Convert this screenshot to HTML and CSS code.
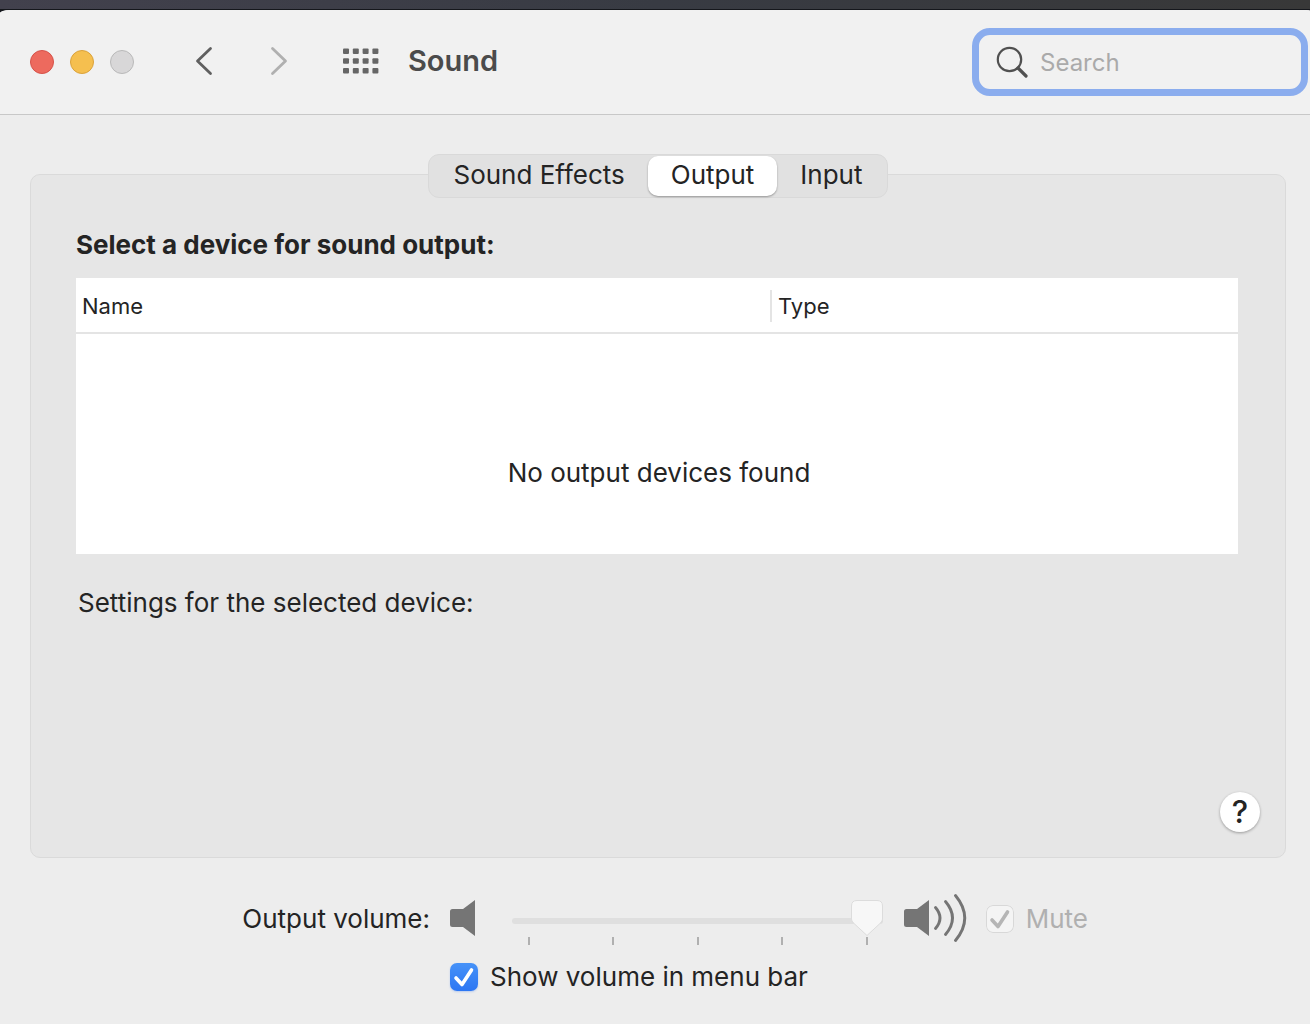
FILE: index.html
```html
<!DOCTYPE html>
<html lang="en">
<head>
<meta charset="utf-8">
<meta name="viewport" content="width=device-width, initial-scale=1">
<title>Sound</title>
<link rel="stylesheet" href="styles.css">
</head>
<body>
<div class="window">
  <header class="titlebar">
    <div class="lights">
      <button class="light light-close" type="button" aria-label="Close"></button>
      <button class="light light-minimize" type="button" aria-label="Minimize"></button>
      <button class="light light-zoom" type="button" aria-label="Zoom" disabled></button>
    </div>
    <nav class="history">
      <button class="icon-button" type="button" aria-label="Back">
        <svg width="20" height="32" viewBox="0 0 20 32"><path d="M16.500 2.500 3.500 15l13 12.500" fill="none" stroke="#606060" stroke-width="2.800" stroke-linecap="round" stroke-linejoin="round"/></svg>
      </button>
      <button class="icon-button" type="button" aria-label="Forward" disabled>
        <svg width="20" height="32" viewBox="0 0 20 32"><path d="M3.500 2.500 16.500 15l-13 12.500" fill="none" stroke="#b0b0b0" stroke-width="2.800" stroke-linecap="round" stroke-linejoin="round"/></svg>
      </button>
    </nav>
    <button class="icon-button" type="button" aria-label="Show all">
      <svg width="36" height="28" viewBox="0 0 36 28" fill="#666">
        <g id="dots"><rect x="0" y="0.500" width="6" height="5.500" rx="1"/><rect x="9.800" y="0.500" width="6" height="5.500" rx="1"/><rect x="19.600" y="0.500" width="6" height="5.500" rx="1"/><rect x="29.400" y="0.500" width="6" height="5.500" rx="1"/></g>
        <use href="#dots" y="9.700"/><use href="#dots" y="19.400"/>
      </svg>
    </button>
    <h1 class="title">Sound</h1>
    <label class="search">
      <svg width="34" height="34" viewBox="0 0 34 34" fill="none" stroke="#505050" stroke-linecap="round"><circle cx="14.500" cy="14.500" r="11.700" stroke-width="2.200"/><path d="m23 23 8 8" stroke-width="3.200"/></svg>
      <input class="search-input" type="search" placeholder="Search" aria-label="Search">
    </label>
  </header>

  <main class="content">
    <div class="tabs" role="tablist">
      <button class="tab" type="button" role="tab">Sound Effects</button>
      <button class="tab tab-active" type="button" role="tab" aria-selected="true">Output</button>
      <button class="tab" type="button" role="tab">Input</button>
    </div>
    <section class="panel">
      <h2 class="heading">Select a device for sound output:</h2>
      <table class="devices">
        <thead>
          <tr><th class="col-name">Name</th><th><span class="col-type">Type</span></th></tr>
        </thead>
        <tbody>
          <tr><td colspan="2">No output devices found</td></tr>
        </tbody>
      </table>
      <p class="settings">Settings for the selected device:</p>
      <button class="help" type="button" aria-label="Help">?</button>
    </section>
  </main>

  <footer class="volume">
    <label class="volume-label" for="volume">Output volume:</label>
    <div class="volume-row">
      <svg class="quiet" width="26" height="40" viewBox="0 0 26 40" fill="#757575"><path d="M2.500 10H13L25 1v36L13 28H2.500Q0 28 0 25.500v-13Q0 10 2.500 10z"/></svg>
      <div class="slider">
        <input class="range" id="volume" type="range" min="0" max="100" value="100">
        <div class="ticks"><i></i><i></i><i></i><i></i><i></i></div>
      </div>
      <svg class="loud" width="64" height="52" viewBox="0 0 64 52"><path fill="#757575" d="M2.500 16H13L25 7v36L13 34H2.500Q0 34 0 31.500v-13Q0 16 2.500 16z"/><g fill="none" stroke="#757575" stroke-width="2.900" stroke-linecap="round"><path d="M31.500 14.500q9 10.500 0 21"/><path d="M41.500 8.500q14 16.500 0 33"/><path d="M51.500 2.500q18.500 22.500 0 45"/></g></svg>
      <label class="check check-mute"><input class="box" type="checkbox" checked disabled>Mute</label>
    </div>
    <label class="check check-menu"><input class="box" type="checkbox" checked>Show volume in menu bar</label>
  </footer>
</div>
</body>
</html>
```
FILE: styles.css
```css
* { box-sizing: border-box; }

body {
  margin: 0;
  min-height: 100vh;
  padding-top: 10px;
  display: flex;
  background: linear-gradient(90deg, #42414d, #383b43 50%, #383838) top / 100% 9px no-repeat #15171c;
  color: #242424;
  font-family: Inter, "Liberation Sans", sans-serif;
  font-size: 26px;
  line-height: 32px;
}

button, input { font: inherit; color: inherit; }
button { border: 0; padding: 0; background: none; }
svg { display: block; flex: none; }

.window {
  flex: 1;
  display: flex;
  flex-direction: column;
  border-radius: 10px 4px 0 0 / 3px 1px 0 0;
  background: #ededed;
  overflow: hidden;
}

.titlebar {
  display: flex;
  align-items: center;
  height: 105px;
  padding: 0 2px 1px 30px;
  background: #f1f1f1;
  border-bottom: 1px solid #c8c8c8;
}

.lights { display: flex; gap: 16px; }
.light {
  width: 24px;
  height: 24px;
  border: 1px solid;
  border-radius: 50%;
}
.light-close { background: #ed6a5e; border-color: #d65249; }
.light-minimize { background: #f5bf4f; border-color: #dba23b; }
.light-zoom { background: #d8d7d8; border-color: #b9b9b9; }

.history { display: flex; gap: 55px; margin: 0 54px 0 60px; }

.title {
  margin: 0 auto 0 29px;
  padding-bottom: 2px;
  color: #4b4b4b;
  font-size: 29px;
  font-weight: 600;
}

.search {
  display: flex;
  align-items: center;
  gap: 11px;
  width: 336px;
  height: 68px;
  padding: 0 14px 0 16px;
  border: 7px solid #8badee;
  border-radius: 18px;
}
.search-input {
  flex: 1;
  min-width: 0;
  padding: 3px 0 0;
  border: 0;
  outline: 0;
  background: none;
  font-size: 24px;
}
.search-input::placeholder { color: #aaa; }

.content {
  flex: 1;
  display: flex;
  flex-direction: column;
  padding: 39px 24px 0 30px;
}

.tabs {
  z-index: 1;
  align-self: center;
  display: flex;
  height: 44px;
  margin-bottom: -24px;
  padding: 1px;
  border: 1px solid #d9d9d9;
  border-radius: 11px;
  background: #e1e1e1;
}
.tab { padding: 0 23px 2px; border-radius: 10px; }
.tab-active {
  background: #fff;
  box-shadow: 0 1px 2px #0005;
}

.panel {
  flex: 1;
  display: flex;
  flex-direction: column;
  padding: 54px 47px 25px 45px;
  border: 1px solid #dadada;
  border-radius: 10px;
  background: #e6e6e6;
}

.heading {
  margin: 0 0 17px;
  font-size: 26px;
  font-weight: 700;
}

.devices {
  width: 100%;
  border-collapse: collapse;
  background: #fff;
}
.devices th {
  height: 55px;
  padding: 2px 0 0;
  border-bottom: 2px solid #e4e4e4;
  font-size: 22px;
  font-weight: 400;
  text-align: left;
}
.devices .col-name { width: 694px; padding-left: 6px; }
.col-type {
  display: block;
  padding-left: 6px;
  border-left: 2px solid #e4e4e4;
}
.devices td {
  height: 221px;
  padding: 58px 0 0 4px;
  text-align: center;
}

.settings { margin: 33px 0 0 2px; }

.help {
  align-self: flex-end;
  width: 40px;
  height: 40px;
  margin: auto -22px 0 0;
  border-radius: 50%;
  background: #fff;
  box-shadow: 0 1px 3px #0005;
  font-size: 31px;
  font-weight: 500;
}

.volume {
  display: grid;
  grid-template-columns: 188px 638px;
  column-gap: 20px;
  row-gap: 16px;
  justify-content: center;
  padding: 35px 0 31px 20px;
}
.volume-label { align-self: center; text-align: right; }
.volume-row { display: flex; align-items: center; height: 52px; }
.quiet { margin-right: 36px; }

.slider { width: 371px; padding-top: 7px; }
.range {
  display: block;
  width: 100%;
  height: 42px;
  margin: 0;
  appearance: none;
  background: none;
}
.range::-webkit-slider-runnable-track {
  height: 6px;
  border-radius: 3px;
  background: #dfdfdf;
}
.range::-webkit-slider-thumb {
  appearance: none;
  width: 32px;
  height: 36px;
  margin-top: -18px;
  background: url("data:image/svg+xml,%3Csvg xmlns='http://www.w3.org/2000/svg' viewBox='0 0 32 36'%3E%3Cpath d='M6 .5h20q5.500 0 5.500 5.500v13q0 2-2 4L16 35.500 2.500 23q-2-2-2-4V6Q.500.500 6 .500z' fill='%23f7f7f7' stroke='%23dcdcdc'/%3E%3C/svg%3E") no-repeat;
}
.ticks {
  display: flex;
  justify-content: space-between;
  margin-top: -5px;
  padding: 0 15px 0 16px;
}
.ticks i { width: 2px; height: 8px; background: #b0b0b0; }

.loud { margin: 0 18px 0 21px; }

.check { display: flex; align-items: center; gap: 12px; }
.check-mute { color: #b0b0b0; }
.check-menu { grid-column: 2; }
.box {
  appearance: none;
  flex: none;
  width: 28px;
  height: 28px;
  margin: 0;
  border-radius: 7px;
  background: url("data:image/svg+xml,%3Csvg xmlns='http://www.w3.org/2000/svg' viewBox='0 0 28 28'%3E%3Cpath d='m6 15 6 6.500L21.500 7' fill='none' stroke='white' stroke-width='3.600' stroke-linecap='round' stroke-linejoin='round'/%3E%3C/svg%3E"), linear-gradient(#4692f8, #2c76f3);
  box-shadow: 0 1px 2px #2c76f344;
}
.box:disabled {
  background: url("data:image/svg+xml,%3Csvg xmlns='http://www.w3.org/2000/svg' viewBox='0 0 28 28'%3E%3Cpath d='m6 15 6 6.500L21.500 7' fill='none' stroke='%23b5b5b5' stroke-width='3.600' stroke-linecap='round' stroke-linejoin='round'/%3E%3C/svg%3E") #f4f4f4;
  box-shadow: inset 0 0 0 1px #d8d8d8;
}
```
